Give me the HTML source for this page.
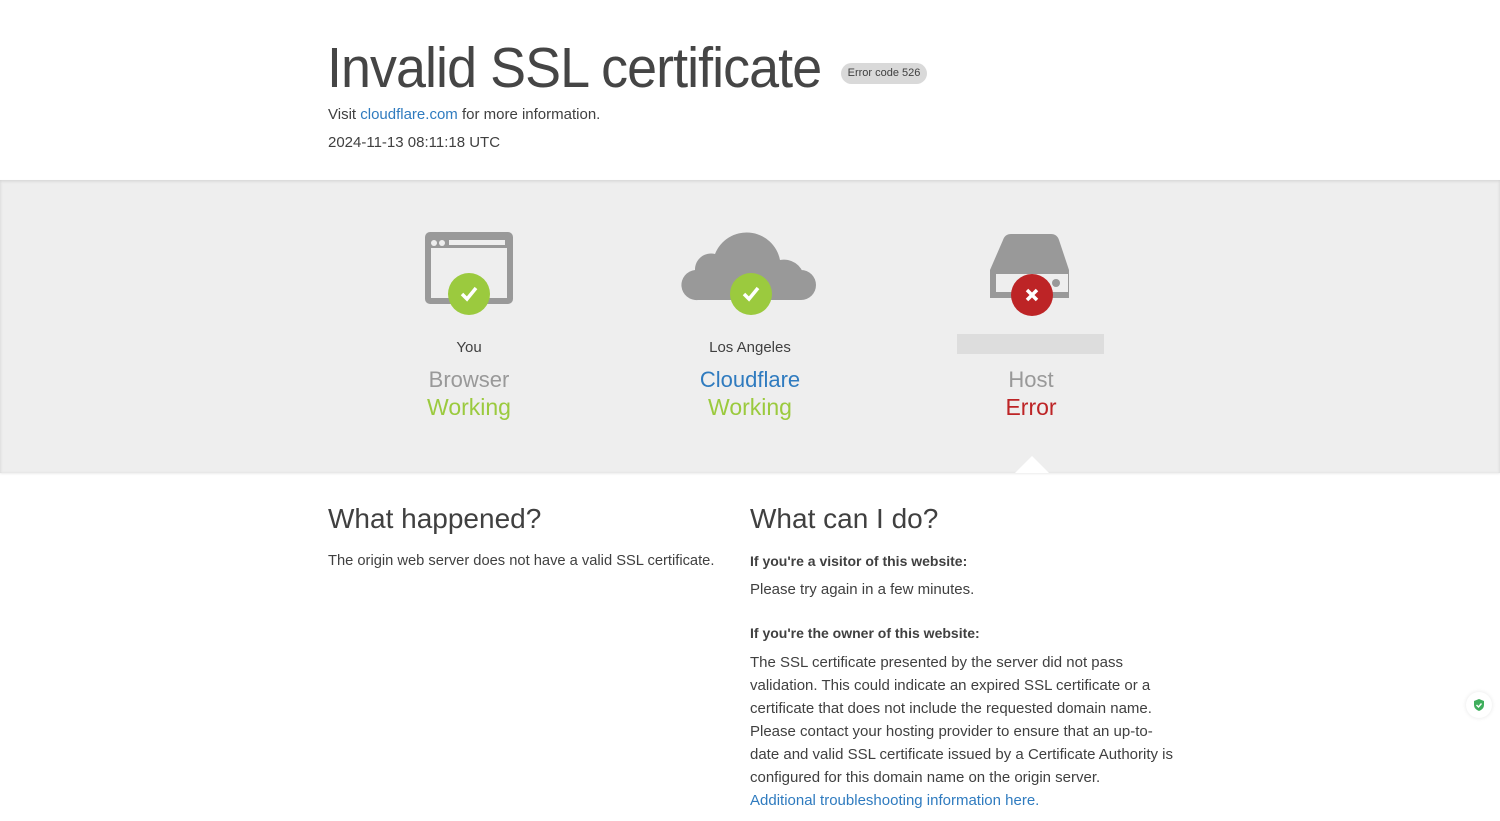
<!DOCTYPE html>
<html><head><meta charset="utf-8"><style>
*{margin:0;padding:0;box-sizing:border-box}
body{width:1500px;height:821px;overflow:hidden;background:#fff;font-family:"Liberation Sans",sans-serif;color:#404040;position:relative}
.a{position:absolute;white-space:nowrap}
a{color:#2f7bbf;text-decoration:none}
.band{position:absolute;left:0;top:180px;width:1500px;height:293px;background:#eee;box-shadow:inset 0 1px 3px rgba(0,0,0,.12), 0 1px 2px rgba(0,0,0,.08)}
.c{position:absolute;text-align:center;width:300px}
</style></head><body>
<div class="a" style="left:327px;top:35px;font-size:57px;letter-spacing:-1px;color:#454545;transform:scaleX(0.945);transform-origin:0 0">Invalid SSL certificate</div>
<div class="a" style="left:841px;top:63px;width:86px;height:21px;border-radius:11px;background:#d9d9d9;font-size:11px;line-height:21px;text-align:center;color:#404040">Error code 526</div>
<div class="a" style="left:328px;top:106px;font-size:15px">Visit <a>cloudflare.com</a> for more information.</div>
<div class="a" style="left:328px;top:134px;font-size:15px">2024-11-13 08:11:18 UTC</div>
<div class="band"></div>
<div class="a" style="left:1015px;top:456px;width:0;height:0;border-left:17px solid transparent;border-right:17px solid transparent;border-bottom:17px solid #fff"></div>
<svg class="a" style="left:420px;top:228px" width="100" height="90">
<rect x="5" y="4" width="88" height="72" rx="5" fill="#999"/><rect x="11" y="20" width="76" height="50" fill="#eee"/>
<circle cx="14" cy="15" r="3" fill="#eee"/><circle cx="22" cy="15" r="3" fill="#eee"/><rect x="29" y="12" width="56" height="5" fill="#eee"/>
<circle cx="49" cy="66" r="21" fill="#9bca3e"/><path d="M42 66l5 5 9-11" stroke="#fff" stroke-width="3.5" fill="none"/></svg>
<svg class="a" style="left:680px;top:228px" width="140" height="90">
<path d="M18 72a15 15 0 0 1-3-30 16 16 0 0 1 20-16 34 34 0 0 1 65 6 16 16 0 0 1 8 40z" fill="#999"/><rect x="4" y="42" width="132" height="30" rx="15" fill="#999"/>
<circle cx="71" cy="66" r="21" fill="#9bca3e"/><path d="M64 66l5 5 9-11" stroke="#fff" stroke-width="3.5" fill="none"/></svg>
<svg class="a" style="left:985px;top:228px" width="95" height="92">
<path d="M18 12q2-6 8-6h40q6 0 8 6l10 30v28h-79v-28z" fill="#999"/><rect x="11" y="46" width="72" height="18" fill="#eee"/><circle cx="71" cy="55" r="4" fill="#999"/>
<circle cx="47" cy="67" r="21" fill="#bd2426"/><path d="M42 62l10 10M52 62l-10 10" stroke="#fff" stroke-width="3.5"/></svg>
<div class="a" style="left:957px;top:334px;width:147px;height:20px;background:#ddd"></div>
<div class="c" style="left:319px;top:339px;font-size:15px">You</div>
<div class="c" style="left:600px;top:339px;font-size:15px">Los Angeles</div>
<div class="c" style="left:319px;top:367px;font-size:22px;color:#999">Browser</div>
<div class="c" style="left:600px;top:367px;font-size:22px;color:#2f7bbf">Cloudflare</div>
<div class="c" style="left:881px;top:367px;font-size:22px;color:#999">Host</div>
<div class="c" style="left:319px;top:394px;font-size:23px;color:#9bca3e">Working</div>
<div class="c" style="left:600px;top:394px;font-size:23px;color:#9bca3e">Working</div>
<div class="c" style="left:881px;top:394px;font-size:23px;color:#bd2426">Error</div>
<div class="a" style="left:328px;top:503px;font-size:28px">What happened?</div>
<div class="a" style="left:328px;top:553px;font-size:14.7px">The origin web server does not have a valid SSL certificate.</div>
<div class="a" style="left:750px;top:503px;font-size:28px">What can I do?</div>
<div class="a" style="left:750px;top:553px;font-size:14px;font-weight:bold;color:#404040">If you're a visitor of this website:</div>
<div class="a" style="left:750px;top:581px;font-size:15px">Please try again in a few minutes.</div>
<div class="a" style="left:750px;top:625px;font-size:14px;font-weight:bold">If you're the owner of this website:</div>
<div class="a" style="left:750px;top:651px;font-size:15px;line-height:23px;white-space:normal;width:430px">The SSL certificate presented by the server did not pass validation. This could indicate an expired SSL certificate or a certificate that does not include the requested domain name. Please contact your hosting provider to ensure that an up-to-date and valid SSL certificate issued by a Certificate Authority is configured for this domain name on the origin server. <a style="display:block">Additional troubleshooting information here.</a></div>
<div class="a" style="left:1466px;top:692px;width:26px;height:26px;border-radius:13px;background:#fff;box-shadow:0 0 4px rgba(0,0,0,.1)"><svg width="26" height="26"><path d="M13 7l5 2v4q0 4-5 6-5-2-5-6v-4z" fill="#3fae5c"/><path d="M10.5 13l2 2 3-3.5" stroke="#fff" stroke-width="1.4" fill="none"/></svg></div>
</body></html>
